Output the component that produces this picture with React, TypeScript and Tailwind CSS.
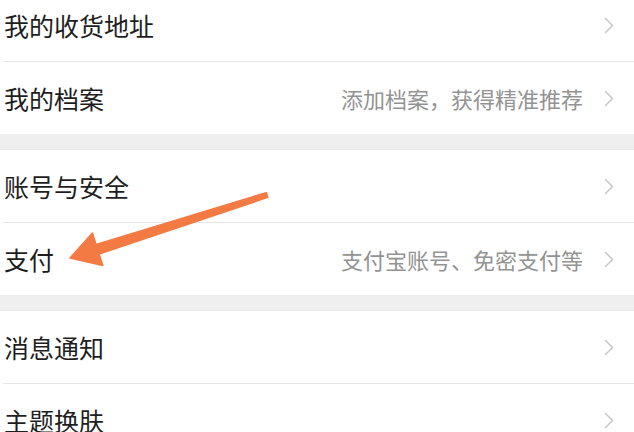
import React from 'react';

type Item = { label: string; hint?: string };

const groups: Item[][] = [
    [{ label: '我的收货地址' }, { label: '我的档案', hint: '添加档案，获得精准推荐' }],
    [{ label: '账号与安全' }, { label: '支付', hint: '支付宝账号、免密支付等' }],
    [{ label: '消息通知' }, { label: '主题换肤' }],
];

const Chevron: React.FC = () => (
    <svg width="10" height="17" viewBox="0 0 10 17" fill="none" className="shrink-0">
        <path d="M1.5 1.5 L8.5 8.5 L1.5 15.5" stroke="#c6c6c6" strokeWidth="1.5" strokeLinecap="round" strokeLinejoin="round" />
    </svg>
);

const Row: React.FC<{ item: Item }> = ({ item }) => (
    <div className="flex h-[72px] items-center pl-[4px] pr-[20px] bg-white">
        <span className="flex-1 text-[25px] leading-none text-[#1e1e1e]">{item.label}</span>
        {item.hint && (
            <span className="mr-[21px] text-[22px] leading-none text-[#939393]">{item.hint}</span>
        )}
        <Chevron />
    </div>
);

const App: React.FC = () => {
    return (
        <div
            className="relative h-[432px] w-full overflow-hidden bg-white"
            style={{ fontFamily: '"Noto Sans CJK SC", "Noto Sans", sans-serif' }}
        >
            <div className="-mt-[11px] flex flex-col">
                {groups.map((group, gi) => (
                    <div key={gi} className="flex flex-col">
                        {gi > 0 && <div className="h-[16px] bg-[#efefef] border-b border-[#e9e9e9]" />}
                        {group.map((item, i) => (
                            <div key={item.label}>
                                {i > 0 && <div className="ml-[3px] h-px bg-[#e6e6e6]" />}
                                <Row item={item} />
                            </div>
                        ))}
                    </div>
                ))}
            </div>

            {/* annotation arrow pointing at 支付 */}
            <svg className="pointer-events-none absolute inset-0" width="634" height="432" viewBox="0 0 634 432">
                <polygon
                    points="266.2,192.6 96.1,244.4 92.4,233 70,258 102.8,265.4 99.1,254 267.8,197.4"
                    fill="#f47a44"
                    stroke="#f47a44"
                    strokeWidth="1.5"
                    strokeLinejoin="round"
                />
            </svg>
        </div>
    );
};

export default App;
